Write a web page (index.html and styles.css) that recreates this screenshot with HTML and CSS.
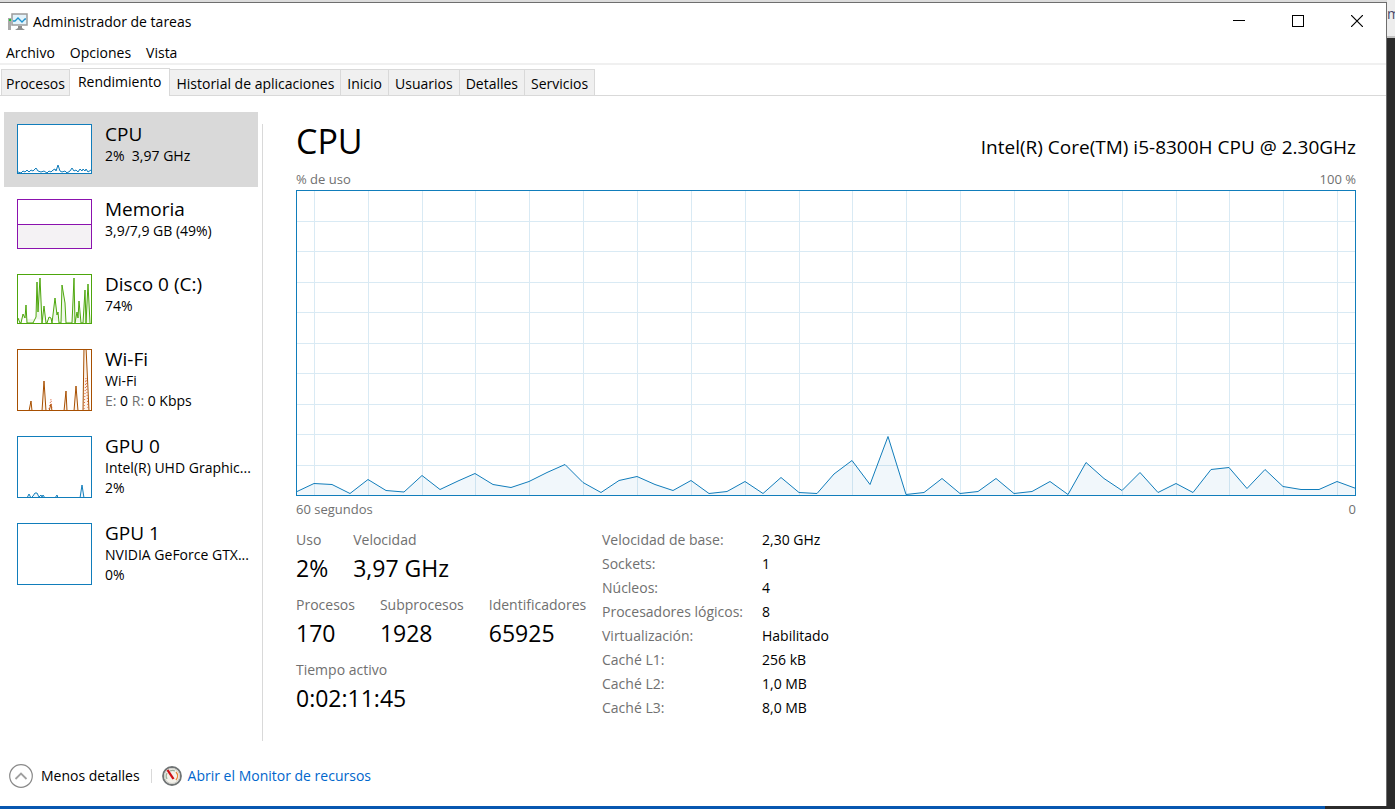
FILE: index.html
```html
<!DOCTYPE html>
<html lang="es">
<head>
  <meta charset="UTF-8">
  <meta name="viewport" content="width=device-width, initial-scale=1.0">
  <title>Administrador de tareas</title>
  <link rel="stylesheet" href="styles.css">
</head>
<body>
  <div class="window">
    <header class="titlebar">
      <svg class="app-icon" width="20" height="18" viewBox="0 0 20 18">
        <rect x="0" y="5" width="3" height="12" fill="#a9a9a9"/>
        <rect x="1" y="6" width="2" height="2" fill="#22c832"/>
        <rect x="4" y="1" width="15" height="11" fill="#e3f3fb" stroke="#9b9b9b" stroke-width="1.5"/>
        <path d="M5 8h2l3-3 4 4 3-3h1" fill="none" stroke="#2292cc" stroke-width="1.3"/>
        <path d="M10 13h4v2l3 2H7l3-2z" fill="#8e8e8e"/>
      </svg>
      <span class="app-name">Administrador de tareas</span>
      <div class="window-buttons">
        <button aria-label="Minimizar"><svg width="12" height="12"><path d="M0 5.5h12"/></svg></button>
        <button aria-label="Maximizar"><svg width="12" height="12"><path d="M.5.5h11v11H.5z"/></svg></button>
        <button aria-label="Cerrar"><svg class="close" width="12" height="12"><path d="M0 0l12 12M12 0L0 12"/></svg></button>
      </div>
    </header>
    <nav class="menu">
      <button>Archivo</button>
      <button>Opciones</button>
      <button>Vista</button>
    </nav>
    <div class="tabs" role="tablist">
      <button class="tab" role="tab">Procesos</button>
      <button class="tab active" role="tab" aria-selected="true">Rendimiento</button>
      <button class="tab" role="tab">Historial de aplicaciones</button>
      <button class="tab" role="tab">Inicio</button>
      <button class="tab" role="tab">Usuarios</button>
      <button class="tab" role="tab">Detalles</button>
      <button class="tab" role="tab">Servicios</button>
    </div>

    <div class="content">
      <aside class="sidebar">
        <button class="item selected">
          <svg class="thumb cpu" viewBox="0 0 73 48" preserveAspectRatio="none">
            <polyline points="0,47 3,48 5,46 7,47 9,45 11,47 13,45 15,46 17,44 18,43 20,46 23,47 26,46 29,48 31,46 33,47 35,45 37,44 38,46 40,40 42,46 44,47 47,46 49,48 52,46 54,43 56,46 58,45 60,47 62,44 64,46 65,44 67,46 68,44 70,47 73,45"/>
          </svg>
          <span class="info"><span class="name">CPU</span><span class="detail">2%&nbsp; 3,97 GHz</span></span>
        </button>
        <button class="item">
          <svg class="thumb memory" viewBox="0 0 73 48" preserveAspectRatio="none">
            <path d="M-2 24.5h77v26H-2z"/>
          </svg>
          <span class="info"><span class="name">Memoria</span><span class="detail">3,9/7,9 GB (49%)</span></span>
        </button>
        <button class="item">
          <svg class="thumb disk" viewBox="0 0 73 48" preserveAspectRatio="none">
            <polyline points="0,43 2,48 3,48 5,39 7,43 8,30 9,48 15,48 18,42 19,7 20,37 22,3 24,48 26,31 28,48 29,48 31,42 33,43 34,48 37,23 39,40 40,37 41,48 43,48 44,10 47,28 48,48 54,48 56,3 57,48 59,37 60,43 61,26 63,48 65,48 67,15 68,48 70,9 72,48"/>
          </svg>
          <span class="info"><span class="name">Disco 0 (C:)</span><span class="detail">74%</span></span>
        </button>
        <button class="item">
          <svg class="thumb wifi" viewBox="0 0 73 60" preserveAspectRatio="none">
            <polyline points="-1,61 11,61 13,51 14,61 24,61 26,31 28,61 31,61 33,54 34,61 46,61 48,41 49,61 56,61 58,36 60,61 65,61 66,-3 68,-3 71,61"/>
            <path class="dotted" d="M31 59l2-10 1 10M66 59l2-31 2 31"/>
          </svg>
          <span class="info"><span class="name">Wi-Fi</span><span class="detail">Wi-Fi</span><span class="detail"><span class="gray">E:</span> 0 <span class="gray">R:</span> 0 Kbps</span></span>
        </button>
        <button class="item">
          <svg class="thumb gpu" viewBox="0 0 73 60" preserveAspectRatio="none">
            <polyline points="-1,61 9,61 11,57 13,61 15,59 17,56 19,56 21,60 23,58 24,60 25,58 27,61 37,61 39,58 40,61 62,61 64,48 66,61 74,61"/>
          </svg>
          <span class="info"><span class="name">GPU 0</span><span class="detail">Intel(R) UHD Graphic...</span><span class="detail">2%</span></span>
        </button>
        <button class="item">
          <svg class="thumb gpu" viewBox="0 0 73 60"></svg>
          <span class="info"><span class="name">GPU 1</span><span class="detail">NVIDIA GeForce GTX...</span><span class="detail">0%</span></span>
        </button>
      </aside>

      <main class="panel">
        <div class="heading">
          <h1>CPU</h1>
          <h2>Intel(R) Core(TM) i5-8300H CPU @ 2.30GHz</h2>
        </div>
        <div class="scale"><span>% de uso</span><span>100 %</span></div>
        <svg class="chart" viewBox="0 0 1060 306" preserveAspectRatio="none">
          <path class="grid" d="M18.5 0v306M72.5 0v306M126.5 0v306M179.5 0v306M233.5 0v306M287.5 0v306M341.5 0v306M395.5 0v306M449.5 0v306M503.5 0v306M556.5 0v306M610.5 0v306M664.5 0v306M718.5 0v306M772.5 0v306M826.5 0v306M880.5 0v306M933.5 0v306M987.5 0v306M1041.5 0v306
            M0 31.5h1060M0 61.5h1060M0 92.5h1060M0 122.5h1060M0 153.5h1060M0 183.5h1060M0 214.5h1060M0 244.5h1060M0 275.5h1060"/>
          <polygon class="area" points="0,306 0,302 18,293.5 36,294.5 54,303.5 72,289.5 90,300.5 108,302 126,285.5 144,299.5 162,291 179,283.5 197,294.5 215,297.5 233,291.5 251,282.5 269,274.5 287,292.5 305,302.5 323,290.5 341,286.5 359,294.5 377,300.5 395,290.5 413,303.5 431,301.5 449,291.5 467,303.5 485,287.5 503,302.5 521,303.5 538,284 556,270.5 574,294.5 592,246.5 610,304.5 628,302.5 646,288.5 664,303.5 682,301.5 700,288.5 718,303.5 736,301.5 754,291.5 772,304.5 790,272.5 808,288.5 826,300.5 844,282.5 862,302.5 880,293.5 897,302.5 915,279.5 933,277.5 951,298.5 969,279.5 987,296.5 1005,299.5 1023,299.5 1041,291.5 1060,298.5 1060,306"/>
          <rect class="frame" x="0.5" y="0.5" width="1059" height="305"/>
        </svg>
        <div class="scale bottom"><span>60 segundos</span><span>0</span></div>

        <div class="stats">
          <div class="counters">
            <dl>
              <div><dt>Uso</dt><dd>2%</dd></div>
              <div><dt>Velocidad</dt><dd>3,97 GHz</dd></div>
            </dl>
            <dl>
              <div><dt>Procesos</dt><dd>170</dd></div>
              <div><dt>Subprocesos</dt><dd>1928</dd></div>
              <div><dt>Identificadores</dt><dd>65925</dd></div>
            </dl>
            <dl>
              <div><dt>Tiempo activo</dt><dd>0:02:11:45</dd></div>
            </dl>
          </div>
          <table class="specs">
            <tr><th>Velocidad de base:</th><td>2,30 GHz</td></tr>
            <tr><th>Sockets:</th><td>1</td></tr>
            <tr><th>Núcleos:</th><td>4</td></tr>
            <tr><th>Procesadores lógicos:</th><td>8</td></tr>
            <tr><th>Virtualización:</th><td>Habilitado</td></tr>
            <tr><th>Caché L1:</th><td>256 kB</td></tr>
            <tr><th>Caché L2:</th><td>1,0 MB</td></tr>
            <tr><th>Caché L3:</th><td>8,0 MB</td></tr>
          </table>
        </div>
      </main>
    </div>

    <footer class="footer">
      <button class="less">
        <svg width="24" height="24" viewBox="0 0 24 24" fill="none">
          <circle cx="12" cy="12" r="11.3" stroke="#8a8a8a" stroke-width="1.2"/>
          <path d="M6.5 15l5.5-5.5 5.5 5.5" stroke="#a0a0a0" stroke-width="1.8"/>
        </svg>
        Menos detalles
      </button>
      <a class="monitor" href="#">
        <svg width="20" height="20" viewBox="0 0 20 20" fill="none">
          <circle cx="10" cy="10" r="9" fill="#f3f1ea" stroke="#6f7374" stroke-width="1.8"/>
          <circle cx="10" cy="10" r="7.5" stroke="#cfcfca"/>
          <path d="M5 13a6 6 0 0 1 0-6M8 5a6 6 0 0 1 5 0" stroke="#9bb09b" stroke-width="1.2"/>
          <path d="M14 6a6 6 0 0 1 0 8" stroke="#e8873a" stroke-width="1.3"/>
          <path d="M4.5 4.5l2-1 6 9-2 1z" fill="#cf1016"/>
        </svg>
        Abrir el Monitor de recursos
      </a>
    </footer>
  </div>
  <div class="behind"><div class="behind-top">m</div></div>
  <div class="taskbar"></div>
</body>
</html>
```
FILE: styles.css
```css
* {
  box-sizing: border-box;
}

body {
  margin: 0;
  min-height: 100vh;
  display: grid;
  grid-template-columns: minmax(0, 1fr) 8px;
  grid-template-rows: 1fr 3px;
  background: #2b2b2b;
  color: #000;
  font-family: "Open Sans", "Noto Sans", sans-serif;
  font-size: 14px;
  line-height: 20px;
}

button {
  font: inherit;
  color: inherit;
  background: none;
  border: none;
  padding: 0;
  text-align: left;
}

.window {
  display: flex;
  flex-direction: column;
  background: #fff;
  border-top: 1px solid #6e6e6e;
  border-right: 1px solid #6e6e6e;
  box-shadow: 0 -2px 0 #dcdcdc;
  margin-top: 2px;
}

.titlebar {
  display: flex;
  align-items: center;
  height: 37px;
  padding-left: 8px;
}

.app-name {
  margin-left: 5px;
}

.window-buttons {
  display: flex;
  align-self: flex-start;
  margin-left: auto;
}

.window-buttons button {
  display: flex;
  align-items: center;
  justify-content: center;
  width: 59px;
  height: 36px;
}

.window-buttons svg {
  fill: none;
  stroke: #000;
  shape-rendering: crispEdges;
}

.window-buttons .close {
  shape-rendering: auto;
  stroke-width: 1.2;
}

.menu {
  display: flex;
  gap: 15px;
  height: 25px;
  padding: 3px 6px;
  border-bottom: 2px solid #f0f0f0;
}

.tabs {
  display: flex;
  align-items: flex-end;
  height: 31px;
  padding-left: 1px;
  border-bottom: 1px solid #d9d9d9;
}

.tab {
  height: 26px;
  padding: 2px 6px 0;
  background: #f0f0f0;
  border: 1px solid #d9d9d9;
  border-left: none;
  border-bottom: none;
  white-space: nowrap;
}

.tab:first-child {
  padding: 2px 4px 0;
  border-left: 1px solid #d9d9d9;
}

.tab.active {
  height: 28px;
  margin-bottom: -1px;
  padding: 0 8px 2px;
  background: #fff;
}

.content {
  flex: 1;
  display: flex;
}

.sidebar {
  position: relative;
  width: 263px;
  flex-shrink: 0;
  padding: 16px 4px 0;
}

.sidebar::after {
  content: "";
  position: absolute;
  top: 28px;
  right: 0;
  bottom: 0;
  width: 1px;
  background: #d9d9d9;
}

.item {
  display: flex;
  gap: 13px;
  width: 254px;
  padding: 12px 0 13px 13px;
}

.item.selected {
  background: #d9d9d9;
}

.info {
  min-width: 0;
  height: 50px;
}

.thumb {
  flex-shrink: 0;
  width: 75px;
  height: 50px;
  background: #fff;
  border: 1px solid #117dbb;
  fill: #f1f6fa;
  stroke: #117dbb;
}

.thumb.memory {
  border-color: #8b12ae;
  fill: #f4f2f4;
  stroke: #8b12ae;
}

.thumb.disk {
  border-color: #4da60c;
  fill: #eff7e9;
  stroke: #4da60c;
}

.thumb.wifi {
  border-color: #a74f01;
  fill: #fcf3eb;
  stroke: #a74f01;
}

.thumb.wifi,
.thumb.gpu {
  height: 62px;
}

.thumb .dotted {
  fill: none;
  stroke: #d9623b;
  stroke-dasharray: 1 2;
}

.name {
  display: block;
  margin-bottom: 2px;
  font-size: 19px;
  line-height: 20px;
}

.detail {
  display: block;
  white-space: nowrap;
}

.gray {
  color: #707070;
}

.panel {
  flex: 1;
  min-width: 0;
  padding: 24px 30px 0 33px;
}

.heading {
  display: flex;
  justify-content: space-between;
  align-items: baseline;
  height: 48px;
}

h1 {
  margin: 0;
  font-size: 34px;
  line-height: 42px;
  font-weight: 400;
}

h2 {
  margin: 0;
  font-size: 19px;
  font-weight: 400;
}

.scale {
  display: flex;
  justify-content: space-between;
  font-size: 13px;
  line-height: 22px;
  color: #707070;
}

.scale.bottom {
  line-height: 26px;
}

.chart {
  display: block;
  width: 100%;
  height: 306px;
}

.chart .grid {
  fill: none;
  stroke: #d9eaf4;
  shape-rendering: crispEdges;
}

.chart .area {
  fill: rgba(17, 125, 187, 0.06);
  stroke: #117dbb;
}

.chart .frame {
  fill: none;
  stroke: #117dbb;
  shape-rendering: crispEdges;
}

.stats {
  display: flex;
  padding-top: 6px;
}

.counters {
  width: 306px;
  white-space: nowrap;
}

dl {
  display: flex;
  gap: 25px;
  height: 65px;
  margin: 0;
}

dt {
  line-height: 24px;
  color: #707070;
}

dd {
  margin: 0;
  font-size: 23px;
  line-height: 32px;
}

.specs {
  border-collapse: collapse;
  align-self: flex-start;
  line-height: 24px;
  white-space: nowrap;
}

.specs th {
  width: 160px;
  padding: 0;
  font-weight: 400;
  text-align: left;
  color: #707070;
}

.specs td {
  padding: 0;
}

.footer {
  display: flex;
  align-items: center;
  height: 65px;
  padding: 5px 9px 0;
}

.less,
.monitor {
  display: flex;
  align-items: center;
}

.less {
  gap: 8px;
  padding-right: 11px;
}

.monitor {
  gap: 6px;
  height: 14px;
  padding-left: 10px;
  border-left: 1px solid #d9d9d9;
  color: #0066cc;
  text-decoration: none;
}

.behind {
  overflow: hidden;
}

.behind-top {
  height: 38px;
  padding-top: 4px;
  background: #ededed;
  border-bottom: 2px solid #c4c4c4;
  color: #4a4a6a;
}

.taskbar {
  grid-column: 1 / -1;
  background: linear-gradient(90deg, #0757b0 95%, #2b2b2b 95%);
}
```
